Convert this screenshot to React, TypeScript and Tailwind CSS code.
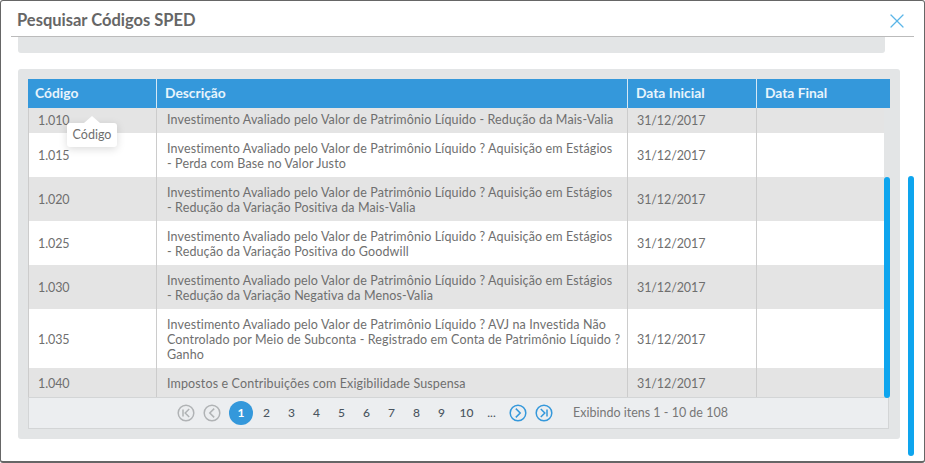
import { X } from "lucide-react";

const rows = [
  { codigo: "1.010", linhas: ["Investimento Avaliado pelo Valor de Patrimônio Líquido - Redução da Mais-Valia"], h: "h-[25px]", desc: "pb-[3px]", data: "pb-[1px]" },
  { codigo: "1.015", linhas: ["Investimento Avaliado pelo Valor de Patrimônio Líquido ? Aquisição em Estágios", "- Perda com Base no Valor Justo"], h: "h-[44px]", desc: "pt-[1px]", data: "pt-[1px]" },
  { codigo: "1.020", linhas: ["Investimento Avaliado pelo Valor de Patrimônio Líquido ? Aquisição em Estágios", "- Redução da Variação Positiva da Mais-Valia"], h: "h-[44px]", desc: "pt-[1px]", data: "pt-[1px]" },
  { codigo: "1.025", linhas: ["Investimento Avaliado pelo Valor de Patrimônio Líquido ? Aquisição em Estágios", "- Redução da Variação Positiva do Goodwill"], h: "h-[44px]", desc: "pt-[1px]", data: "pt-[1px]" },
  { codigo: "1.030", linhas: ["Investimento Avaliado pelo Valor de Patrimônio Líquido ? Aquisição em Estágios", "- Redução da Variação Negativa da Menos-Valia"], h: "h-[44px]", desc: "pt-[1px]", data: "pt-[1px]" },
  { codigo: "1.035", linhas: ["Investimento Avaliado pelo Valor de Patrimônio Líquido ? AVJ na Investida Não", "Controlado por Meio de Subconta - Registrado em Conta de Patrimônio Líquido ?", "Ganho"], h: "h-[59px]", desc: "pt-[1px]", data: "pt-[1px]" },
  { codigo: "1.040", linhas: ["Impostos e Contribuições com Exigibilidade Suspensa"], h: "h-[29px]", desc: "pt-[1px]", data: "pt-[1px]" },
];

function PagerIcon({ dir, bar, active }: { dir: "left" | "right"; bar?: boolean; active?: boolean }) {
  let chevron = dir === "left" ? "M11.2 4.6 L6.8 9 L11.2 13.4" : "M6.8 4.6 L11.2 9 L6.8 13.4";
  if (bar) chevron = dir === "left" ? "M12.2 5 L8.2 9 L12.2 13" : "M5.8 5 L9.8 9 L5.8 13";
  const barX = dir === "left" ? 6 : 12;
  return (
    <svg width="18" height="18" viewBox="0 0 18 18" fill="none" stroke={active ? "#3498db" : "#b0b3b5"} strokeWidth="1.5">
      <circle cx="9" cy="9" r="7.8" />
      <path d={chevron} />
      {bar && <path d={`M${barX} 5.5 V12.5`} />}
    </svg>
  );
}

export default function App() {
  return (
    <div className="relative h-[463px] w-[925px] overflow-hidden rounded-[3px] border border-b-2 border-[#666] bg-white font-['Lato',sans-serif] text-[#6f6f6f]">
      <header className="mx-[10px] flex h-[36px] items-center justify-between border-b border-[#bbb] pl-[6px] pr-[5px]">
        <h1 className="pt-[4px] text-[16.5px] font-bold text-[#666]">Pesquisar Códigos SPED</h1>
        <X className="mt-[4px] h-[24px] w-[24px] text-[#5bb5e8]" strokeWidth={1.2} />
      </header>

      <div className="ml-[17px] h-[16px] w-[867px] rounded-b-[3px] bg-[#e3e5e6]" />

      <section className="ml-[17px] mt-[16px] h-[370px] w-[882px] rounded-[3px] bg-[#e3e5e6] p-[10px]">
        <div className="flex h-[29px] w-[862px] bg-[#3498db] text-[13.8px] font-bold text-[#e8f4fc]">
          <div className="flex w-[129px] items-center border-r border-[#d5e8f5] pl-[7px]">Código</div>
          <div className="flex w-[471px] items-center border-r border-[#d5e8f5] pl-[8px]">Descrição</div>
          <div className="flex w-[129px] items-center border-r border-[#d5e8f5] pl-[8px]">Data Inicial</div>
          <div className="flex flex-1 items-center pl-[8px]">Data Final</div>
        </div>

        <div className="w-[856px] border-l border-[#ccc] text-[12.5px] leading-[15px] tracking-[0.13px]">
          {rows.map((row, i) => (
            <div key={row.codigo} className={`flex ${row.h} ${i % 2 === 0 ? "bg-[#e4e4e4]" : "bg-white"}`}>
              <div className={`flex w-[128px] items-center border-r border-[#ccc] pl-[9px] tracking-[-0.1px] ${row.data}`}>{row.codigo}</div>
              <div className={`flex w-[471px] flex-col justify-center border-r border-[#ccc] pl-[10px] ${row.desc}`}>
                {row.linhas.map((linha) => (
                  <span key={linha} className="whitespace-nowrap">{linha}</span>
                ))}
              </div>
              <div className={`flex w-[129px] items-center border-r border-[#ccc] pl-[9px] tracking-[-0.1px] ${row.data}`}>31/12/2017</div>
              <div className="flex-1" />
            </div>
          ))}
        </div>

        <div className="flex h-[32px] w-[861px] items-center border border-[#d3d5d6] bg-[#eceef0] pl-[148px]">
          <div className="flex items-center gap-[8px]">
            <PagerIcon dir="left" bar />
            <PagerIcon dir="left" />
          </div>
          <span className="ml-[8px] flex h-[24px] w-[24px] items-center justify-center rounded-full bg-[#3498db] text-[12px] font-bold text-white">1</span>
          <div className="ml-[1px] flex items-center text-[12px] font-medium text-[#4a5560]">
            {["2", "3", "4", "5", "6", "7", "8", "9", "10", "..."].map((n) => (
              <span key={n} className="w-[25px] text-center">{n}</span>
            ))}
          </div>
          <div className="ml-[5px] flex items-center gap-[8px]">
            <PagerIcon dir="right" active />
            <PagerIcon dir="right" bar active />
          </div>
          <span className="ml-[20px] text-[12.5px] text-[#777]">Exibindo itens 1 - 10 de 108</span>
        </div>
      </section>

      {/* barras de rolagem */}
      <div className="absolute left-[883px] top-[176px] h-[221px] w-[6px] rounded-[3px] bg-[#0ea5ee]" />
      <div className="absolute left-[907px] top-[175px] h-[280px] w-[6px] rounded-[3px] bg-[#0ea5ee]" />

      {/* tooltip */}
      <div className="absolute left-[66px] top-[122px] flex h-[24px] w-[50px] items-center justify-center rounded-[3px] bg-white text-[12.5px] shadow-[0_2px_8px_rgba(0,0,0,0.15)]">
        <span className="absolute left-[17px] top-[-7px] h-0 w-0 border-x-[8px] border-b-[7px] border-x-transparent border-b-white" />
        Código
      </div>
    </div>
  );
}
